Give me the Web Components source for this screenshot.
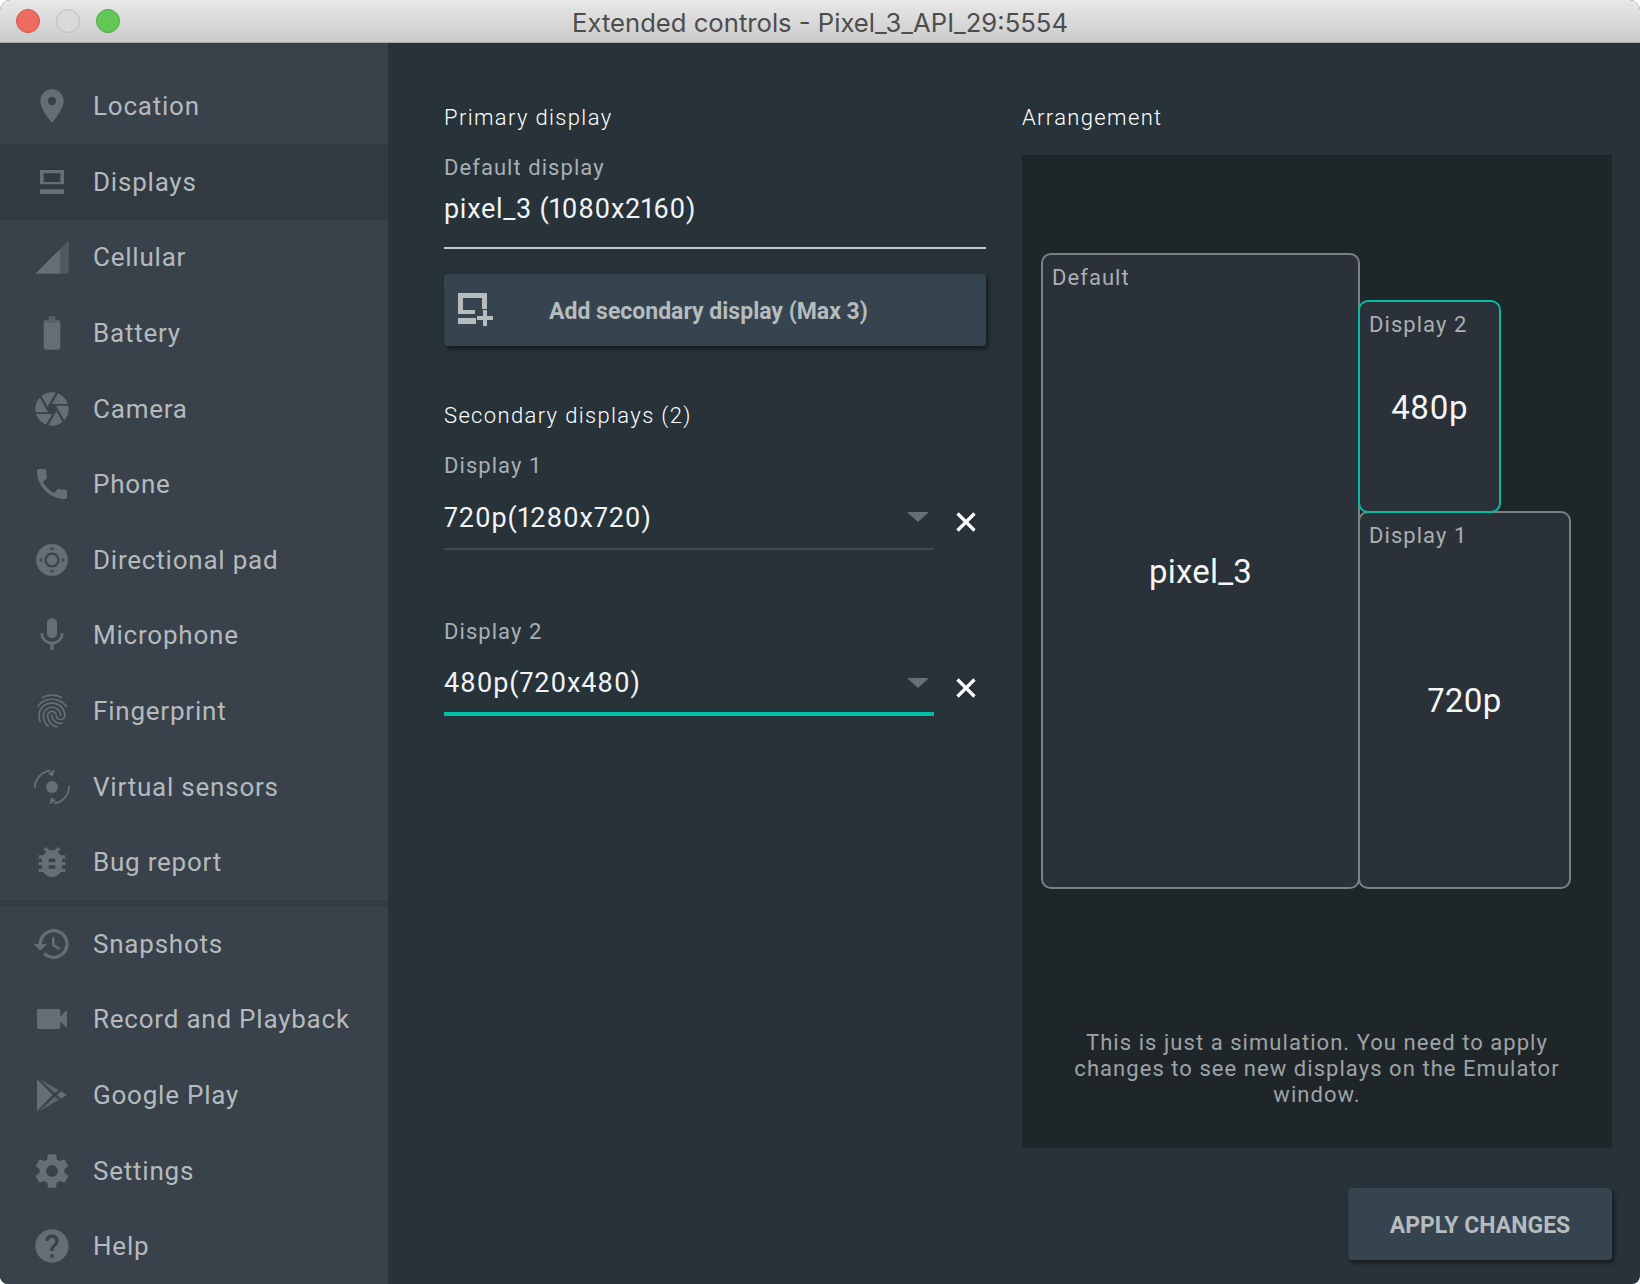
<!DOCTYPE html>
<html>
<head>
<meta charset="utf-8">
<title>Extended controls</title>
<style>
html, body { margin: 0; background: #fff; }
body { width: 1640px; height: 1284px; overflow: hidden; font-family: Roboto, "Liberation Sans", sans-serif; }
</style>
</head>
<body>
<emu-window>
  <emu-titlebar slot="title">Extended controls - Pixel_3_API_29:5554</emu-titlebar>

  <nav-group slot="nav">
    <nav-item icon="location">Location</nav-item>
    <nav-item icon="displays" selected>Displays</nav-item>
    <nav-item icon="cellular">Cellular</nav-item>
    <nav-item icon="battery">Battery</nav-item>
    <nav-item icon="camera">Camera</nav-item>
    <nav-item icon="phone">Phone</nav-item>
    <nav-item icon="dpad">Directional pad</nav-item>
    <nav-item icon="mic">Microphone</nav-item>
    <nav-item icon="fingerprint">Fingerprint</nav-item>
    <nav-item icon="sensors">Virtual sensors</nav-item>
    <nav-item icon="bug">Bug report</nav-item>
  </nav-group>
  <nav-group slot="nav" class="lower">
    <nav-item icon="history">Snapshots</nav-item>
    <nav-item icon="video">Record and Playback</nav-item>
    <nav-item icon="play">Google Play</nav-item>
    <nav-item icon="settings">Settings</nav-item>
    <nav-item icon="help">Help</nav-item>
  </nav-group>

  <displays-page slot="main">
    <section-title>Primary display</section-title>
    <text-field label="Default display">pixel_3 (1080x2160)</text-field>
    <raised-button icon wide>Add secondary display (Max 3)</raised-button>
    <section-title style="margin-top:54px">Secondary displays (2)</section-title>
    <select-field label="Display 1">720p(1280x720)</select-field>
    <select-field label="Display 2" active style="margin-top:67px">480p(720x480)</select-field>

    <section-title slot="right">Arrangement</section-title>
    <arrangement-canvas slot="right">
      <display-node label="Default" left="19" top="98" width="319" height="636">pixel_3</display-node>
      <display-node label="Display 1" left="336" top="356" width="213" height="378">720p</display-node>
      <display-node label="Display 2" left="336" top="145" width="143" height="213" active>480p</display-node>
      <span slot="note">This is just a simulation. You need to apply changes to see new displays on the Emulator window.</span>
    </arrangement-canvas>
    <raised-button slot="right" class="apply">APPLY CHANGES</raised-button>
  </displays-page>
</emu-window>

<script>
const ICONS = {
  location: '<path d="M12 2C8.13 2 5 5.13 5 9c0 5.25 7 13 7 13s7-7.75 7-13c0-3.87-3.13-7-7-7zm0 9.5a2.5 2.5 0 0 1 0-5 2.5 2.5 0 0 1 0 5z"/>',
  displays: '<path fill-rule="evenodd" d="M4.8 4.8h14.4v8.6H4.8zM7 6.8V12h10V6.8z"/><path d="M4.8 16.3h14.4v2.9H4.8z"/>',
  cellular: '<path opacity=".55" d="M17 7l5-5v20h-5z"/><path d="M2 22L17 7v15z"/>',
  battery: '<path opacity=".7" d="M14 4h-4V2h4zM8.33 4h7.34C16.4 4 17 4.6 17 5.33V6H7v-.67C7 4.6 7.6 4 8.33 4z"/><path d="M7 6h10v14.67c0 .73-.6 1.33-1.33 1.33H8.33C7.6 22 7 21.4 7 20.67z"/>',
  camera: '<path d="M9.4 10.5l4.77-8.26C13.47 2.09 12.75 2 12 2c-2.4 0-4.6.85-6.32 2.25l3.66 6.35.06-.1zM21.54 9c-.92-2.92-3.15-5.26-6-6.34L11.88 9h9.66zm.26 1h-7.49l.29.5 4.76 8.25C21 16.97 22 14.61 22 12c0-.69-.07-1.35-.2-2zM8.54 12l-3.9-6.75C3.01 7.03 2 9.39 2 12c0 .69.07 1.35.2 2h7.49l-1.15-2zm-6.08 3c.92 2.92 3.15 5.26 6 6.34L12.12 15H2.46zm11.27 0l-3.9 6.76c.7.15 1.42.24 2.17.24 2.4 0 4.6-.85 6.32-2.25l-3.66-6.35-.93 1.6z"/>',
  phone: '<path d="M6.62 10.79c1.44 2.83 3.76 5.14 6.59 6.59l2.2-2.2c.27-.27.67-.36 1.02-.24 1.12.37 2.33.57 3.57.57.55 0 1 .45 1 1V20c0 .55-.45 1-1 1-9.39 0-17-7.61-17-17 0-.55.45-1 1-1h3.5c.55 0 1 .45 1 1 0 1.25.2 2.45.57 3.57.11.35.03.74-.25 1.02l-2.2 2.2z"/>',
  dpad: '<circle cx="12" cy="12" r="9.6"/><circle cx="12" cy="12" r="3.9" fill="none" stroke="#39414a" stroke-width="1.3"/><path fill="#39414a" d="M12 4.2l1.4 1.6h-2.8zM12 19.8l-1.4-1.6h2.8zM4.2 12l1.6-1.4v2.8zM19.8 12l-1.6 1.4v-2.8z"/>',
  mic: '<path d="M12 14c1.66 0 2.99-1.34 2.99-3L15 5c0-1.66-1.34-3-3-3S9 3.34 9 5v6c0 1.66 1.34 3 3 3zm5.3-3c0 3-2.54 5.1-5.3 5.1S6.7 14 6.7 11H5c0 3.41 2.72 6.23 6 6.72V21h2v-3.28c3.28-.48 6-3.3 6-6.72h-1.7z"/>',
  fingerprint: '<path d="M17.81 4.47c-.08 0-.16-.02-.23-.06C15.66 3.42 14 3 12.01 3c-1.98 0-3.86.47-5.57 1.41-.24.13-.54.04-.68-.2-.13-.24-.04-.55.2-.68C7.82 2.52 9.86 2 12.01 2c2.13 0 3.99.47 6.03 1.52.25.13.34.43.21.67-.09.18-.26.28-.44.28zM3.5 9.72c-.1 0-.2-.03-.29-.09-.23-.16-.28-.47-.12-.7.99-1.4 2.25-2.5 3.75-3.27C9.98 4.04 14 4.03 17.15 5.65c1.5.77 2.76 1.86 3.75 3.25.16.22.11.54-.12.7-.23.16-.54.11-.7-.12-.9-1.26-2.04-2.25-3.39-2.94-2.87-1.47-6.54-1.47-9.4.01-1.36.7-2.5 1.7-3.4 2.96-.08.14-.23.21-.39.21zm6.25 12.07c-.13 0-.26-.05-.35-.15-.87-.87-1.34-1.43-2.01-2.64-.69-1.23-1.05-2.73-1.05-4.34 0-2.97 2.54-5.39 5.66-5.39s5.66 2.42 5.66 5.39c0 .28-.22.5-.5.5s-.5-.22-.5-.5c0-2.42-2.09-4.39-4.66-4.39-2.57 0-4.66 1.97-4.66 4.39 0 1.44.32 2.77.93 3.85.64 1.15 1.08 1.64 1.85 2.42.19.2.19.51 0 .71-.11.1-.24.15-.37.15zm7.17-1.85c-1.19 0-2.24-.3-3.1-.89-1.49-1.01-2.38-2.65-2.38-4.39 0-.28.22-.5.5-.5s.5.22.5.5c0 1.41.72 2.74 1.94 3.56.71.48 1.54.71 2.54.71.24 0 .64-.03 1.04-.1.27-.05.53.13.58.41.05.27-.13.53-.41.58-.57.11-1.07.12-1.21.12zM14.91 22c-.04 0-.09-.01-.13-.02-1.59-.44-2.63-1.03-3.72-2.1-1.4-1.39-2.17-3.24-2.17-5.22 0-1.62 1.38-2.94 3.08-2.94 1.7 0 3.08 1.32 3.08 2.94 0 1.07.93 1.94 2.08 1.94s2.08-.87 2.08-1.94c0-3.77-3.25-6.83-7.25-6.83-2.84 0-5.44 1.58-6.61 4.03-.39.81-.59 1.76-.59 2.8 0 .78.07 2.01.67 3.61.1.26-.03.55-.29.64-.26.1-.55-.04-.64-.29-.49-1.31-.73-2.61-.73-3.96 0-1.2.23-2.29.68-3.24 1.33-2.79 4.28-4.6 7.51-4.6 4.55 0 8.25 3.51 8.25 7.83 0 1.62-1.38 2.94-3.08 2.94s-3.08-1.32-3.08-2.94c0-1.07-.93-1.94-2.08-1.94s-2.08.87-2.08 1.94c0 1.71.66 3.31 1.87 4.51.95.94 1.86 1.46 3.27 1.85.27.07.42.35.35.61-.05.23-.26.38-.47.38z"/>',
  sensors: '<circle cx="12" cy="12" r="3.6"/><path fill="none" stroke="currentColor" stroke-width="1.1" d="M1.7 12.6A10.4 10.4 0 0 1 10.8 2.2M22.3 11.4a10.4 10.4 0 0 1-9.1 10.4"/><path d="M9.6 3.9l4-2.4-1.1 4.3zM14.4 20.1l-4 2.4 1.1-4.3z"/>',
  bug: '<path d="M20 8h-2.81c-.45-.78-1.07-1.45-1.82-1.96L17 4.41 15.59 3l-2.17 2.17C12.96 5.06 12.49 5 12 5c-.49 0-.96.06-1.41.17L8.41 3 7 4.41l1.62 1.63C7.88 6.55 7.26 7.22 6.81 8H4v2h2.09c-.05.33-.09.66-.09 1v1H4v2h2v1c0 .34.04.67.09 1H4v2h2.81c1.04 1.79 2.97 3 5.19 3s4.15-1.21 5.19-3H20v-2h-2.09c.05-.33.09-.66.09-1v-1h2v-2h-2v-1c0-.34-.04-.67-.09-1H20V8zm-6 8h-4v-2h4v2zm0-4h-4v-2h4v2z"/>',
  history: '<path d="M13 3c-4.97 0-9 4.03-9 9H1l3.89 3.89.07.14L9 12H6c0-3.87 3.13-7 7-7s7 3.13 7 7-3.13 7-7 7c-1.93 0-3.68-.79-4.94-2.06l-1.42 1.42C8.27 19.99 10.51 21 13 21c4.97 0 9-4.03 9-9s-4.03-9-9-9zm-1 5v5l4.28 2.54.72-1.21-3.5-2.08V8H12z"/>',
  video: '<path d="M17 10.5V7c0-.55-.45-1-1-1H4c-.55 0-1 .45-1 1v10c0 .55.45 1 1 1h12c.55 0 1-.45 1-1v-3.5l4 4v-11l-4 4z"/>',
  play: '<path d="M3 2.4L12.4 12 3 21.6z"/><path opacity=".8" d="M4.2 2.2l12.2 7-2.9 1.7zM4.2 21.8l12.2-7-2.9-1.7z"/><path d="M17.3 9.8L21 12l-3.7 2.2-2.2-2.2z"/>',
  settings: '<path d="M19.43 12.98c.04-.32.07-.64.07-.98s-.03-.66-.07-.98l2.11-1.65c.19-.15.24-.42.12-.64l-2-3.46c-.12-.22-.39-.3-.61-.22l-2.49 1c-.52-.4-1.08-.73-1.69-.98l-.38-2.65C14.46 2.18 14.25 2 14 2h-4c-.25 0-.46.18-.49.42l-.38 2.65c-.61.25-1.17.59-1.69.98l-2.49-1c-.23-.09-.49 0-.61.22l-2 3.46c-.13.22-.07.49.12.64l2.11 1.65c-.04.32-.07.65-.07.98s.03.66.07.98l-2.11 1.65c-.19.15-.24.42-.12.64l2 3.46c.12.22.39.3.61.22l2.49-1c.52.4 1.08.73 1.69.98l.38 2.65c.03.24.24.42.49.42h4c.25 0 .46-.18.49-.42l.38-2.65c.61-.25 1.17-.59 1.69-.98l2.49 1c.23.09.49 0 .61-.22l2-3.46c.12-.22.07-.49-.12-.64l-2.11-1.65zM12 15.5c-1.93 0-3.5-1.57-3.5-3.5s1.57-3.5 3.5-3.5 3.5 1.57 3.5 3.5-1.57 3.5-3.5 3.5z"/>',
  help: '<path d="M12 2C6.48 2 2 6.48 2 12s4.48 10 10 10 10-4.48 10-10S17.52 2 12 2zm1 17h-2v-2h2v2zm2.07-7.75l-.9.92C13.45 12.9 13 13.5 13 15h-2v-.5c0-1.1.45-2.1 1.17-2.83l1.24-1.26c.37-.36.59-.86.59-1.41 0-1.1-.9-2-2-2s-2 .9-2 2H8c0-2.21 1.79-4 4-4s4 1.79 4 4c0 .88-.36 1.68-.93 2.25z"/>'
};

class Base extends HTMLElement {
  constructor() {
    super();
    this.attachShadow({ mode: 'open' });
  }
  connectedCallback() {
    this.shadowRoot.innerHTML = this.template();
  }
}

class EmuWindow extends Base {
  template() {
    return `<style>
      :host { display: grid; grid-template-rows: 43px 1fr; grid-template-columns: 388px 1fr; width: 1640px; height: 1284px; border-radius: 10px 10px 8px 8px; overflow: hidden; background: #273239; }
      .title { grid-column: 1 / 3; }
      nav { display: flex; flex-direction: column; background: #39414a; min-height: 0; }
      main { min-width: 0; }
    </style>
    <div class="title"><slot name="title"></slot></div>
    <nav><slot name="nav"></slot></nav>
    <main><slot name="main"></slot></main>`;
  }
}

class EmuTitlebar extends Base {
  template() {
    return `<style>
      :host { display: flex; align-items: center; position: relative; height: 43px; box-sizing: border-box; padding-left: 16px; gap: 16px; background: linear-gradient(#e8e8e8, #cbcbcb); border-bottom: 1px solid #a9a9a9; }
      i { display: block; width: 22px; height: 22px; border-radius: 50%; border: 1px solid; }
      .close { background: #ee6b60; border-color: #d5554a; }
      .min { background: #d9d9d9; border-color: #bdbdbd; }
      .zoom { background: #62c755; border-color: #4dab41; }
      span { position: absolute; left: 0; right: 0; top: 2px; text-align: center; font: 25.65px/42px Inter, "Liberation Sans", sans-serif; color: #4d4d4d; }
    </style>
    <i class="close"></i><i class="min"></i><i class="zoom"></i>
    <span><slot></slot></span>`;
  }
}

class NavGroup extends Base {
  template() {
    const lower = this.classList.contains('lower');
    return `<style>
      :host { display: flex; flex-direction: column; box-sizing: border-box; ${lower ? 'height: 384px; border-top: 6px solid #333b43;' : 'height: 857px; padding-top: 25.5px;'} }
    </style><slot></slot>`;
  }
}

class NavItem extends Base {
  template() {
    return `<style>
      :host { display: flex; align-items: center; flex: 1 1 0; padding-left: 32px; color: #b4babe; font: 26px/1 Roboto, sans-serif; letter-spacing: .78px; ${this.hasAttribute('selected') ? 'background: #303a40;' : ''} }
      svg { width: 40px; height: 40px; margin-right: 21px; color: #656e72; fill: currentColor; flex: none; }
    </style>
    <svg viewBox="0 0 24 24">${ICONS[this.getAttribute('icon')]}</svg><slot></slot>`;
  }
}

class DisplaysPage extends Base {
  template() {
    return `<style>
      :host { display: grid; grid-template-columns: 542px 590px; column-gap: 36px; padding: 59px 28px 0 56px; height: 1241px; box-sizing: border-box; }
      .col { display: flex; flex-direction: column; min-width: 0; }
    </style>
    <div class="col"><slot></slot></div>
    <div class="col"><slot name="right"></slot></div>`;
  }
}

class SectionTitle extends Base {
  template() {
    return `<style>
      :host { display: block; font: 300 22px/32px Roboto, sans-serif; letter-spacing: 1.35px; color: #fff; }
    </style><slot></slot>`;
  }
}

class TextField extends Base {
  template() {
    return `<style>
      :host { display: block; margin-top: 19px; }
      label { display: block; font: 22px/30px Roboto, sans-serif; letter-spacing: 1.05px; color: #a9afb3; }
      div { font: 27px/36px Roboto, sans-serif; font-feature-settings: "pnum"; letter-spacing: .7px; color: #f1f3f4; padding: 8px 0 20px; border-bottom: 2px solid #c6cacc; }
    </style>
    <label>${this.getAttribute('label')}</label>
    <div><slot></slot></div>`;
  }
}

class SelectField extends Base {
  template() {
    const active = this.hasAttribute('active');
    return `<style>
      :host { display: block; ${active ? '' : 'margin-top: 19px;'} }
      label { display: block; font: 22px/30px Roboto, sans-serif; letter-spacing: 1.05px; color: #a9afb3; }
      .row { display: flex; align-items: flex-start; }
      .select { display: flex; justify-content: space-between; box-sizing: border-box; width: 490px; padding-top: ${active ? 18 : 19}px; padding-bottom: ${active ? 11 : 12}px; border-bottom: ${active ? '4px solid #00bfa5' : '2px solid #41494f'}; font: 27px/36px Roboto, sans-serif; font-feature-settings: "pnum"; letter-spacing: .9px; color: #f1f3f4; }
      .arrow { width: 0; height: 0; margin: ${active ? 13 : 12}px 5px 0 0; border-left: 11px solid transparent; border-right: 11px solid transparent; border-top: 10px solid #676e74; }
      svg { width: 20px; height: 20px; margin: 31px 0 0 22px; stroke: #fff; stroke-width: 3.2; fill: none; flex: none; }
    </style>
    <label>${this.getAttribute('label')}</label>
    <div class="row">
      <div class="select"><span><slot></slot></span><i class="arrow"></i></div>
      <svg viewBox="0 0 20 20"><path d="M1.5 1.5l17 17M18.5 1.5l-17 17"/></svg>
    </div>`;
  }
}

class RaisedButton extends Base {
  template() {
    const wide = this.hasAttribute('wide');
    const apply = this.classList.contains('apply');
    return `<style>
      :host { display: flex; align-items: center; box-sizing: border-box; height: 72px; border-radius: 4px; background: #35444e; box-shadow: 2px 3px 4px rgba(0,0,0,.45); color: #b6bbbe; font: 700 23px/1 Roboto, sans-serif; ${wide ? 'margin-top: 25px; padding-left: 13px;' : ''} ${apply ? 'align-self: flex-end; width: 264px; justify-content: center; margin-top: 40px;' : ''} }
      svg { width: 36px; height: 36px; margin-right: 56px; fill: currentColor; flex: none; }
      span { padding-top: 2px; }
    </style>
    ${wide ? '<svg viewBox="0 0 36 36"><path d="M1 1h29v16h-5V6H6v12h12v4H1z"/><path d="M1 26h18v6H1zM26 18h4v6h6v4h-6v6h-4v-6h-6v-4h6z"/></svg>' : ''}
    <span><slot></slot></span>`;
  }
}

class ArrangementCanvas extends Base {
  template() {
    return `<style>
      :host { display: flex; flex-direction: column; justify-content: flex-end; position: relative; height: 993px; margin-top: 21px; background: #1f2629; box-sizing: border-box; padding: 0 40px 40px; }
      .note { font: 22px/26px Roboto, sans-serif; letter-spacing: 1.05px; color: #9ea3a6; text-align: center; }
    </style>
    <slot></slot>
    <div class="note"><slot name="note"></slot></div>`;
  }
}

class DisplayNode extends Base {
  template() {
    const g = n => this.getAttribute(n);
    const active = this.hasAttribute('active');
    return `<style>
      :host { display: flex; align-items: center; justify-content: center; position: absolute; box-sizing: border-box; left: ${g('left')}px; top: ${g('top')}px; width: ${g('width')}px; height: ${g('height')}px; padding-top: 1px; background: #2a3138; border: 2px solid ${active ? '#00bfa5' : '#7b8083'}; border-radius: 10px; color: #f4f5f5; font: 33px/1 Roboto, sans-serif; font-feature-settings: "pnum"; letter-spacing: .2px; }
      label { position: absolute; left: 9px; top: 8px; font: 22px/30px Roboto, sans-serif; letter-spacing: 1.05px; color: #a9afb3; }
    </style>
    <label>${g('label')}</label><slot></slot>`;
  }
}

customElements.define('emu-window', EmuWindow);
customElements.define('emu-titlebar', EmuTitlebar);
customElements.define('nav-group', NavGroup);
customElements.define('nav-item', NavItem);
customElements.define('displays-page', DisplaysPage);
customElements.define('section-title', SectionTitle);
customElements.define('text-field', TextField);
customElements.define('select-field', SelectField);
customElements.define('raised-button', RaisedButton);
customElements.define('arrangement-canvas', ArrangementCanvas);
customElements.define('display-node', DisplayNode);
</script>
</body>
</html>
